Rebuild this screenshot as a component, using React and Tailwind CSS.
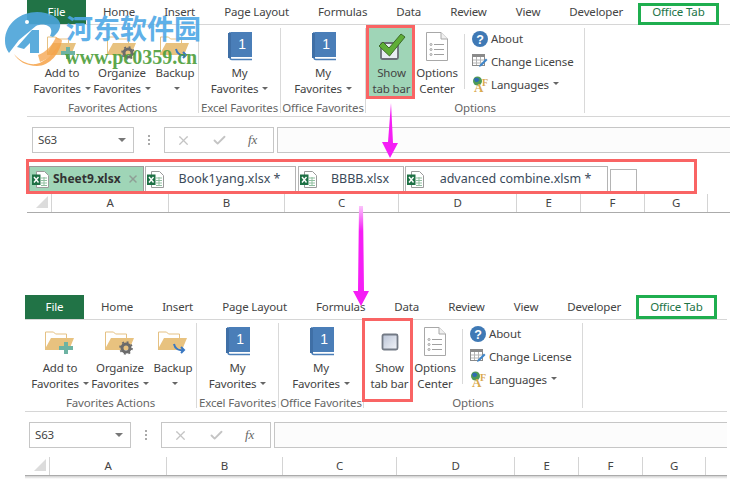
import { X, Check } from 'lucide-react';

const TABS = ['Home', 'Insert', 'Page Layout', 'Formulas', 'Data', 'Review', 'View', 'Developer'];
const COLUMNS = [
  { name: 'A', width: 'w-[117px]' },
  { name: 'B', width: 'w-[116px]' },
  { name: 'C', width: 'w-[114px]' },
  { name: 'D', width: 'w-[118px]' },
  { name: 'E', width: 'w-[64px]' },
  { name: 'F', width: 'w-[64px]' },
  { name: 'G', width: 'w-[63px]' },
];

function Caret() {
  return <span className="inline-block ml-[4px] mb-[2px] w-0 h-0 border-x-[3px] border-x-transparent border-t-[3px] border-t-[#666] align-middle" />;
}

// Carpeta base de los botones de favoritos
function FolderIcon({ badge }) {
  return (
    <svg width="34" height="26" viewBox="0 0 34 26">
      <path d="M2.500 20V3h8l2 2h11v5" fill="#fff" stroke="#e5c183" />
      <path d="M2 20 L8 9 H31 L26 21 H2Z" fill="#e8c27f" />
      {badge === 'plus' && <path d="M21 14h4v4h5v4h-5v4h-4v-4h-5v-4h5z" fill="#6db3a3" transform="translate(0 -1)" />}
      {badge === 'gear' && (
        <g>
          <circle cx="23" cy="19" r="4" fill="none" stroke="#6b6b6b" strokeWidth="3" />
          <circle cx="23" cy="19" r="6" fill="none" stroke="#6b6b6b" strokeWidth="1.600" strokeDasharray="2 2.700" />
        </g>
      )}
      {badge === 'arrow' && <path d="M18 15c1 5 5 7 10 6m-3-3 3 3-3 3" fill="none" stroke="#3a78c2" strokeWidth="2" />}
    </svg>
  );
}

function BookIcon() {
  return (
    <svg width="25" height="29" viewBox="0 0 25 29">
      <rect x="4" y="0" width="21" height="25" fill="#4a7eb8" />
      <path d="M3 0v25.500q0 2 2 2h20" fill="none" stroke="#4a7eb8" strokeWidth="1.500" />
      <rect x="1" y="1" width="3" height="25" fill="#3f6fa6" />
      <text x="15" y="17" fontSize="14" fill="#fff" textAnchor="middle" fontFamily="Liberation Sans">1</text>
    </svg>
  );
}

function ToggleIcon({ checked }) {
  if (!checked) {
    return (
      <svg width="18" height="18" viewBox="0 0 18 18">
        <defs>
          <linearGradient id="boxfill" x1="0" y1="0" x2="1" y2="1">
            <stop offset="0" stopColor="#b9c3d6" />
            <stop offset="1" stopColor="#f3f5f9" />
          </linearGradient>
        </defs>
        <rect x="1.500" y="1.500" width="15" height="15" rx="1.500" fill="url(#boxfill)" stroke="#737a85" strokeWidth="1.800" />
      </svg>
    );
  }
  return (
    <svg width="28" height="28" viewBox="0 0 28 28">
      <rect x="3" y="10" width="17" height="16" rx="1.500" fill="#e8edf3" stroke="#6a6f78" strokeWidth="1.800" />
      <path d="M1 13 L5 9 L11 15 L23 1 L27 4 L11.500 23Z" fill="#5fae37" stroke="#3c6b28" strokeWidth="1" />
    </svg>
  );
}

function DocIcon() {
  return (
    <svg width="22" height="29" viewBox="0 0 22 29">
      <path d="M.5.500H15L21.500 7V28.500H.5Z" fill="#fff" stroke="#a8a8a8" />
      <path d="M15 .5V7h6.500" fill="#f0f0f0" stroke="#a8a8a8" />
      <g fill="none" stroke="#a0a0a0">
        <circle cx="5" cy="12.500" r="1" />
        <circle cx="5" cy="17.500" r="1" />
        <circle cx="5" cy="22.500" r="1" />
        <path d="M8 12.500h10M8 17.500h10M8 22.500h10" />
      </g>
    </svg>
  );
}

function HelpIcon() {
  return (
    <svg width="16" height="16" viewBox="0 0 16 16">
      <circle cx="8" cy="8" r="8" fill="#3f79b5" />
      <text x="8" y="12.500" fontSize="12.500" fontWeight="700" fill="#fff" textAnchor="middle" fontFamily="Liberation Sans">?</text>
    </svg>
  );
}

function LicenseIcon() {
  return (
    <svg width="16" height="15" viewBox="0 0 16 15">
      <rect x=".5" y=".5" width="12" height="11" fill="#fff" stroke="#8a8a8a" />
      <rect x=".5" y=".5" width="12" height="2.500" fill="#8a8a8a" />
      <path d="M4.500 3v8M8.500 3v8M1 6h11M1 9h11" stroke="#b5b5b5" />
      <path d="M7 13 L8 10.500 L14 4.500 L15.500 6 L9.500 12Z" fill="#3f86c9" />
    </svg>
  );
}

function LanguagesIcon() {
  return (
    <svg width="17" height="18" viewBox="0 0 17 18" className="overflow-visible">
      <circle cx="5.500" cy="5" r="4.500" fill="#4f9a55" />
      <path d="M2 3c2-2 4-1 5 0s-1 3-2 3-2 1-3-3z" fill="#2f6db0" />
      <text x="6.500" y="16" fontSize="13" fontWeight="700" fill="#d9a94f" textAnchor="middle" fontFamily="Liberation Serif">A</text>
      <text x="13" y="10" fontSize="10" fontWeight="700" fill="#d9a94f" textAnchor="middle" fontFamily="Liberation Serif">F</text>
    </svg>
  );
}

function ExcelFileIcon() {
  return (
    <svg width="17" height="17" viewBox="0 0 17 17" className="shrink-0">
      <path d="M4.500.5H12.500L16.500 4.500V16.500H4.500Z" fill="#fff" stroke="#9a9a9a" />
      <path d="M9 7h6M9 9.500h6M9 12h6M9 14.500h6M12 6v9" stroke="#8fbf9f" />
      <rect x="0" y="3.500" width="8.500" height="10.500" fill="#1e7145" />
      <path d="M2 6l4.500 5.500M6.500 6L2 11.500" stroke="#fff" strokeWidth="1.400" />
    </svg>
  );
}

function RibbonButton({ width, icon, top, bottom, caret }) {
  return (
    <div className={`${width} shrink-0 flex flex-col items-center`}>
      <div className="h-[37px] flex items-center justify-center">{icon}</div>
      <span className="leading-[16px] whitespace-nowrap">{top}</span>
      <span className="leading-[16px] whitespace-nowrap">{bottom}{caret && <Caret />}</span>
    </div>
  );
}

function Group({ width, label, children }) {
  return (
    <div className={`${width} shrink-0 h-full border-r border-[#d9d9d9] flex flex-col`}>
      <div className="h-[70px] flex">{children}</div>
      <div className="mt-auto -mb-[3px] h-[16px] leading-[16px] text-center text-[#666] whitespace-nowrap">{label}</div>
    </div>
  );
}

function SmallItem({ icon, label, caret }) {
  return (
    <div className="flex items-center h-[23px] whitespace-nowrap">
      <span className="w-[19px] flex">{icon}</span>
      {label}{caret && <Caret />}
    </div>
  );
}

function ColumnHeaders() {
  return (
    <div className="h-[19px] flex border-b border-[#ababab] text-[#444]">
      <div className="w-[25px] shrink-0 border-r border-[#d4d4d4] flex justify-end items-end pr-[3px] pb-[4px]">
        <svg width="12" height="12" viewBox="0 0 12 12"><path d="M12 0V12H0Z" fill="#dcdcdc" /></svg>
      </div>
      {COLUMNS.map(c => (
        <div key={c.name} className={`${c.width} shrink-0 border-r border-[#d4d4d4] text-center leading-[18px]`}>{c.name}</div>
      ))}
    </div>
  );
}

function FormulaBar({ nameLeft }) {
  return (
    <div className={`h-[26px] flex items-stretch ${nameLeft}`}>
      <div className="w-[102px] shrink-0 border border-[#c6c6c6] flex items-center justify-between pl-[5px] pr-[7px] text-[#444]">
        S63
        <span className="w-0 h-0 border-x-[4px] border-x-transparent border-t-[4px] border-t-[#777]" />
      </div>
      <div className="w-[30px] shrink-0 flex flex-col items-center justify-center gap-[2px]">
        <span className="w-[2px] h-[2px] bg-[#aaa]" />
        <span className="w-[2px] h-[2px] bg-[#aaa]" />
        <span className="w-[2px] h-[2px] bg-[#aaa]" />
      </div>
      <div className="w-[110px] shrink-0 border border-[#c6c6c6] flex items-center pl-[11px] gap-[21px] text-[#c4c4c4]">
        <X size={15} strokeWidth={2} />
        <Check size={15} strokeWidth={3} />
        <span className="font-['Liberation_Serif',serif] italic text-[13px] text-[#666]">fx</span>
      </div>
      <div className="flex-1 ml-[3px] border-y border-l border-[#c6c6c6] bg-[#fcfcfc]" />
    </div>
  );
}

function Excel({ checked, panel, marginTop, green, showBox, children }) {
  return (
    <div className={`${panel} ${marginTop} relative flex flex-col text-[11.5px] tracking-[-0.15px] text-[#444]`}>
      {/* Pestañas */}
      <div className="h-[24px] flex items-center">
        <div className="w-[59px] h-full bg-[#217346] text-white flex items-center justify-center shrink-0">File</div>
        <div className="flex gap-[29px] ml-[17px] pb-[1px] whitespace-nowrap">
          {TABS.map(t => <span key={t}>{t}</span>)}
          <span className="relative text-[#217346]">
            Office Tab
            <span className={`absolute -left-[14px] -right-[14px] ${green} border-[3px] border-[#1fae4f]`} />
          </span>
        </div>
      </div>

      {/* Cinta */}
      <div className="h-[93px] border-y border-[#d6d6d6] pt-[3px] pb-[3px] flex">
        <Group width="w-[172px]" label="Favorites Actions">
          <div className="w-[5px]" />
          <RibbonButton width="w-[60px]" icon={<FolderIcon badge="plus" />} top="Add to" bottom="Favorites" caret />
          <RibbonButton width="w-[60px]" icon={<FolderIcon badge="gear" />} top="Organize" bottom="Favorites" caret />
          <RibbonButton width="w-[46px]" icon={<FolderIcon badge="arrow" />} top="Backup" bottom="" caret />
        </Group>
        <Group width="w-[82px]" label="Excel Favorites">
          <RibbonButton width="w-full" icon={<BookIcon />} top="My" bottom="Favorites" caret />
        </Group>
        <Group width="w-[85px]" label="Office Favorites">
          <RibbonButton width="w-full" icon={<BookIcon />} top="My" bottom="Favorites" caret />
        </Group>
        <Group width="w-[219px]" label="Options">
          <div className="w-[49px] shrink-0 relative">
            <div className={`absolute ${showBox} border-[3px] border-[#f96464] ${checked ? 'bg-[#9fd5b7]' : ''}`} />
            <div className="relative pl-[2px]">
              <RibbonButton width="w-full" icon={<ToggleIcon checked={checked} />} top="Show" bottom="tab bar" />
            </div>
          </div>
          <RibbonButton width="w-[44px]" icon={<DocIcon />} top="Options" bottom="Center" />
          <div className="w-px h-[55px] mt-[6px] ml-[5px] shrink-0 bg-[#d9d9d9]" />
          <div className="ml-[7px] -mt-[1px] flex flex-col">
            <SmallItem icon={<HelpIcon />} label="About" />
            <SmallItem icon={<LicenseIcon />} label="Change License" />
            <SmallItem icon={<LanguagesIcon />} label="Languages" caret />
          </div>
        </Group>
      </div>
      {children}
    </div>
  );
}

function FileTab({ width, name, center }) {
  return (
    <div className={`${width} h-[25px] shrink-0 border border-b-0 border-[#b4b4b4] bg-white flex items-center pl-[1px] text-[#3a4a5a]`}>
      <ExcelFileIcon />
      <span className={`${center} text-center whitespace-nowrap`}>{name}</span>
    </div>
  );
}

function Arrows() {
  return (
    <>
      <svg width="20" height="56" viewBox="0 0 20 56" className="absolute left-[380px] top-[103px]">
        <path d="M11 0 L13 40 H18 L10 55 L2 39 H8Z" fill="#f51ef5" />
      </svg>
      <svg width="20" height="100" viewBox="0 0 20 100" className="absolute left-[351px] top-[206px]">
        <defs>
          <linearGradient id="fade" x1="0" y1="0" x2="0" y2="1">
            <stop offset="0" stopColor="#fbc4fb" />
            <stop offset="0.25" stopColor="#f51ef5" />
            <stop offset="1" stopColor="#f51ef5" />
          </linearGradient>
        </defs>
        <path d="M8 0 H12 L13 85 H18 L10 100 L2 85 H7Z" fill="url(#fade)" />
      </svg>
    </>
  );
}

function Watermark() {
  return (
    <div className="absolute left-0 top-0 w-[210px] h-[70px] pointer-events-none">
      <svg width="66" height="56" viewBox="0 0 66 56" className="absolute left-[4px] top-[11px]">
        <path d="M1 30C1 12 17 1 33 1c12 0 21 5 23 11 1 5-2 10-7 14l-3-1c2-4 2-8-2-10-3-2-8-2-12 0L15 29 5 42C2 38 1 34 1 30z" fill="#4aa3d8" opacity="0.9" />
        <path d="M13 36 L28 19 H35 V42 H26 V32 L20 38Z" fill="#4aa3d8" opacity="0.9" />
        <path d="M10 43c6 7 14 11 22 10 10-2 19-12 26-24-2 13-12 26-25 26-11 0-19-5-23-12z" fill="#f6a248" opacity="0.85" />
        <path d="M34 44c8-3 14-9 18-18l6 3c-5 10-12 19-22 22z" fill="#f6a248" opacity="0.75" />
        <circle cx="23" cy="11" r="2" fill="#fff" />
      </svg>
      <span className="absolute left-[66px] top-[11px] font-['Noto_Sans_CJK_SC',sans-serif] font-bold text-[27px] leading-[34px] text-[#4ea8e6] opacity-90 whitespace-nowrap">河东软件园</span>
      <span className="absolute left-[65px] top-[45px] font-['Liberation_Serif',serif] font-bold text-[20px] leading-[24px] text-[#4d9e3a] opacity-90 whitespace-nowrap">www.pc0359.cn</span>
    </div>
  );
}

export default function App() {
  return (
    <div className="relative w-[738px] h-[486px] overflow-hidden bg-white font-['Noto_Sans',sans-serif]">
      <Excel
        checked
        panel="ml-[27px] w-[703px]"
        marginTop="mt-0"
        green="top-0 -bottom-[5px]"
        showBox="-top-[3px] left-0 w-[49px] h-[74px]"
      >
        <div className="mt-[10px]">
          <FormulaBar nameLeft="pl-[5px]" />
        </div>
        {/* Barra de pestañas */}
        <div className="-ml-[1px] mt-[6px] w-[671px] h-[35px] border-[3px] border-[#f96464] flex items-end text-[12.5px] tracking-normal">
          <div className="w-[115px] h-[25px] shrink-0 bg-[#9fd5b7] border border-b-0 border-[#9a9a9a] flex items-center pl-[2px] gap-[4px] font-bold text-[12px] text-[#333]">
            <ExcelFileIcon />
            Sheet9.xlsx
            <X size={12} strokeWidth={3} className="ml-auto mr-[4px] text-[#8f9f96]" />
          </div>
          <div className="w-[1px] shrink-0" />
          <FileTab width="w-[151px]" name="Book1yang.xlsx *" center="w-[133px]" />
          <div className="w-[2px] shrink-0" />
          <FileTab width="w-[106px]" name="BBBB.xlsx" center="w-[88px]" />
          <div className="w-[1px] shrink-0" />
          <FileTab width="w-[203px]" name="advanced combine.xlsm *" center="w-[185px]" />
          <div className="w-[2px] shrink-0" />
          <div className="w-[27px] h-[22px] shrink-0 border border-b-0 border-[#b4b4b4]" />
        </div>
        <ColumnHeaders />
      </Excel>

      <Excel
        checked={false}
        panel="ml-[25px] w-[702px]"
        marginTop="mt-[82px]"
        green="-top-[3px] -bottom-[4px]"
        showBox="-top-[5px] -left-[2px] w-[51px] h-[84px]"
      >
        <div className="mt-[10px]">
          <FormulaBar nameLeft="pl-[4px]" />
        </div>
        <div className="mt-[9px]">
          <ColumnHeaders />
        </div>
        <div className="h-[3px] bg-gradient-to-b from-[#d0d0d0] to-white" />
      </Excel>

      <Arrows />
      <Watermark />
    </div>
  );
}
